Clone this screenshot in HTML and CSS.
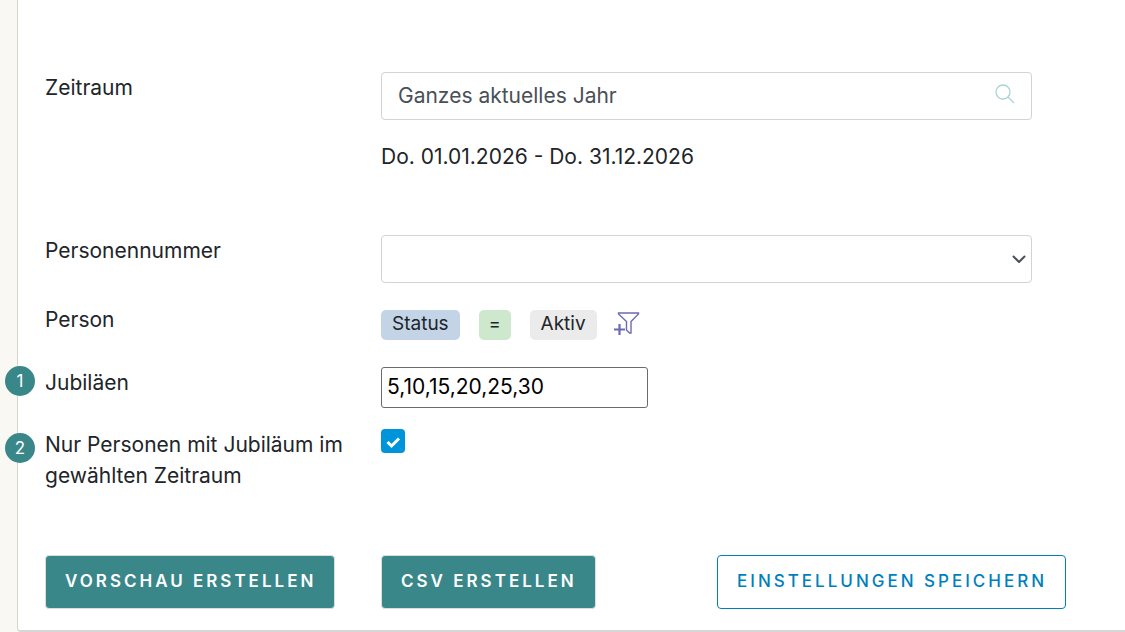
FILE: index.html
```html
<!DOCTYPE html>
<html lang="de">
<head>
<meta charset="utf-8">
<meta name="viewport" content="width=device-width, initial-scale=1">
<title>Jubiläen</title>
<link rel="stylesheet" href="styles.css">
</head>
<body>
<main class="card">
  <form class="form">
    <div class="row row-period">
      <label class="label" for="period">Zeitraum</label>
      <div class="field">
        <div class="search">
          <input class="search-input" id="period" type="text" value="Ganzes aktuelles Jahr">
          <svg class="search-icon" viewBox="0 0 20 20" aria-hidden="true"><circle cx="8" cy="8" r="7"/><path d="M13 13l6 6"/></svg>
        </div>
        <p class="range">Do. 01.01.2026 - Do. 31.12.2026</p>
      </div>
    </div>
    <div class="row row-number">
      <label class="label" for="number">Personennummer</label>
      <div class="field select">
        <select class="select-input" id="number"><option></option></select>
        <svg class="select-icon" viewBox="0 0 14 10" aria-hidden="true"><path d="M1.500 2.500l5.500 5.500 5.500-5.500"/></svg>
      </div>
    </div>
    <div class="row row-person">
      <span class="label">Person</span>
      <div class="field filters">
        <button class="chip chip-field" type="button">Status</button>
        <button class="chip chip-operator" type="button">=</button>
        <button class="chip chip-value" type="button">Aktiv</button>
        <button class="add-filter" type="button" aria-label="Filter hinzufügen">
          <svg class="filter-icon" viewBox="0 0 26 24" aria-hidden="true"><path class="funnel" d="M4.500 1h20v1l-7.500 7.500v11.500h-1.500l-3-3V9.500L4.500 2z"/><path class="plus" d="M0 17.500h11M5.500 12v11"/></svg>
        </button>
      </div>
    </div>
    <div class="row row-years">
      <span class="badge">1</span>
      <label class="label" for="years">Jubiläen</label>
      <div class="field"><input class="years" id="years" type="text" value="5,10,15,20,25,30"></div>
    </div>
    <div class="row row-only">
      <span class="badge badge-low">2</span>
      <label class="label" for="only">Nur Personen mit Jubiläum im gewählten Zeitraum</label>
      <div class="field check">
        <input class="check-input" id="only" type="checkbox" checked>
        <svg class="check-icon" viewBox="0 0 24 24" aria-hidden="true"><path d="M6.500 13l4 4 7.500-7.500"/></svg>
      </div>
    </div>
    <div class="actions">
      <button class="button primary" type="button">VORSCHAU ERSTELLEN</button>
      <button class="button primary" type="button">CSV ERSTELLEN</button>
      <button class="button outline" type="button">EINSTELLUNGEN SPEICHERN</button>
    </div>
  </form>
</main>
</body>
</html>
```
FILE: styles.css
```css
* { box-sizing: border-box; }

body {
  margin: 0;
  padding-left: 17px;
  background: #f9f8f3;
  color: #212529;
  font-family: Inter, "Open Sans", sans-serif;
  font-size: 21px;
  line-height: 31px;
}

input, select, button { margin: 0; font: inherit; }

.card {
  padding: 72px 93px 21px 27px;
  background: #fff;
  border-left: 1px solid #d4d5d0;
  border-bottom: 2px solid #d6d6d6;
  border-bottom-left-radius: 4px;
}

.row, .actions {
  display: grid;
  grid-template-columns: repeat(3, minmax(0, 1fr));
  column-gap: 21px;
  align-items: start;
}

.row { position: relative; }
.field { grid-column: span 2; }
.row-period { padding-bottom: 63px; }
.row-number { padding-bottom: 21px; }
.row-person { padding-bottom: 27px; }
.row-years { padding-bottom: 21px; }
.row-only { padding-bottom: 64px; }

.search, .select, .check { position: relative; }

.search-input, .select-input {
  display: block;
  width: 100%;
  height: 48px;
  padding: 0 48px 2px 16px;
  border: 1px solid #ced4da;
  border-radius: 4px;
  background: #fff;
  color: #495057;
  appearance: none;
}

.search-icon {
  position: absolute;
  top: 12px;
  right: 17px;
  width: 20px;
  height: 20px;
  fill: none;
  stroke: #a9d5d6;
  stroke-width: 1.3;
}

.select-icon {
  position: absolute;
  top: 19px;
  right: 6px;
  width: 14px;
  height: 10px;
  fill: none;
  stroke: #495057;
  stroke-width: 2;
  stroke-linecap: round;
  stroke-linejoin: round;
  pointer-events: none;
}

.range { margin: 21px 0 0; }

.filters {
  display: flex;
  align-items: center;
  gap: 19px;
  padding-top: 6px;
}

.chip {
  height: 30px;
  padding: 0 11px 2px;
  border: 0;
  border-radius: 5px;
  color: #212529;
  font-size: 19px;
  line-height: 28px;
}

.chip-field { background: #c3d4e6; }
.chip-operator { padding: 0 10px 2px; background: #cde8cd; font-size: 18px; }
.chip-value { background: #ebebeb; }

.add-filter {
  height: 26px;
  margin-left: -2px;
  padding: 0 0 2px;
  border: 0;
  background: none;
}

.filter-icon { display: block; width: 26px; height: 24px; fill: none; stroke: #6c69b5; }
.funnel { stroke-width: 1.4; }
.plus { stroke-width: 2.2; }

.years {
  display: block;
  width: 267px;
  height: 41px;
  padding: 0 5px 2px;
  border: 1px solid #6b6b6b;
  border-radius: 3px;
  background: #fff;
  color: #000;
}

.badge {
  position: absolute;
  top: -1px;
  left: -40px;
  width: 30px;
  height: 30px;
  border-radius: 50%;
  background: #3a878a;
  color: #fff;
  font-size: 17px;
  line-height: 30px;
  text-align: center;
}

.badge-low { top: 4px; }

.check { height: 24px; }

.check-input {
  display: block;
  width: 24px;
  height: 24px;
  border-radius: 4px;
  background: #0095db;
  appearance: none;
}

.check-icon {
  position: absolute;
  top: 0;
  left: 0;
  width: 24px;
  height: 24px;
  fill: none;
  stroke: #fff;
  stroke-width: 3;
  pointer-events: none;
}

.check-input:not(:checked) + .check-icon { display: none; }

.button {
  justify-self: start;
  height: 54px;
  padding: 0 18px 2px 19px;
  border: 1px solid #d9dede;
  border-radius: 4px;
  font-size: 17px;
  letter-spacing: 3px;
  white-space: nowrap;
}

.primary { background: #3a878a; color: #fff; font-weight: 600; }
.outline { border-color: #007fbd; background: #fff; color: #007fbd; font-weight: 500; }
```
